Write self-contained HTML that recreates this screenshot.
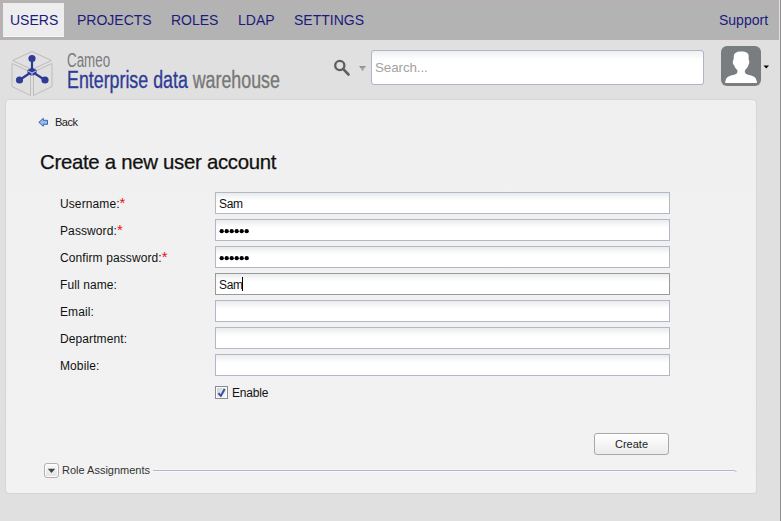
<!DOCTYPE html>
<html><head><meta charset="utf-8">
<style>
*{margin:0;padding:0;box-sizing:border-box}
html,body{width:781px;height:521px;overflow:hidden;background:#e0e0e0;font-family:"Liberation Sans",sans-serif;position:relative}
.abs{position:absolute}
#nav{position:absolute;left:0;top:0;width:779px;height:40px;background:#b3b3b3;border:1px solid #bcb0b0}
#rline{position:absolute;left:780px;top:0;width:1px;height:521px;background:#8f8f8f}
.tab{position:absolute;top:12px;font-size:14px;line-height:16px;color:#1b1b7c;white-space:nowrap}
#utab{position:absolute;left:3px;top:3px;width:61px;height:34px;background:#ededed;border-bottom:1px solid #f6f6f6}
.lbl{position:absolute;left:60px;font-size:12px;line-height:14px;color:#111;white-space:nowrap;letter-spacing:0.1px}
.lbl b{color:#ee1111;font-weight:normal;font-size:15px;margin-left:0;position:relative;top:0px;line-height:0}
.inp{position:absolute;left:215px;width:455px;height:22px;border:1px solid #b5b7c9;background:linear-gradient(#e9ecec 0,#f8f9f9 5px,#fff 8px)}
.inp span{position:absolute;left:3px;top:4px;font-size:12px;line-height:14px;color:#111;letter-spacing:-0.3px}
#panel{position:absolute;left:5px;top:99px;width:752px;height:395px;background:linear-gradient(#f0f0f0,#f2f2f2);border:1px solid #d6d6d6;border-radius:4px}
</style></head>
<body>
<div id="nav"></div>
<div id="utab"></div>
<div class="tab" style="left:10px">USERS</div>
<div class="tab" style="left:77px">PROJECTS</div>
<div class="tab" style="left:171px">ROLES</div>
<div class="tab" style="left:238px">LDAP</div>
<div class="tab" style="left:294px">SETTINGS</div>
<div class="tab" style="left:719px">Support</div>

<!-- logo -->
<svg class="abs" style="left:0;top:40px" width="64" height="60" viewBox="0 40 64 60">
  <g fill="none" stroke="#bcbcbc" stroke-width="1" stroke-linejoin="round">
    <path d="M32 51.5 L51.5 60.5 L32 69.5 L12.5 60.5 Z"/>
    <path d="M12 63.5 L30.5 72 L30.5 95.5 L12 86.5 Z"/>
    <path d="M52 63.5 L33.5 72 L33.5 95.5 L52 86.5 Z"/>
  </g>
  <g fill="#2e3c96" stroke="#2e3c96">
    <line x1="32" y1="59" x2="32" y2="69" stroke-width="2.2"/>
    <line x1="30" y1="73" x2="19.5" y2="80" stroke-width="2.2"/>
    <line x1="34" y1="73" x2="45" y2="80" stroke-width="2.2"/>
    <circle cx="32" cy="58.5" r="3.6" stroke="none"/>
    <circle cx="19.5" cy="80" r="3.6" stroke="none"/>
    <circle cx="45" cy="80" r="3.6" stroke="none"/>
    <path d="M27.5 70 L32 67.5 L36.5 70 L36.5 73.5 L32 76 L27.5 73.5 Z" stroke="none"/>
  </g>
  <path d="M28 71 L32 73 L36 71 M32 73 L32 76.5" fill="none" stroke="#dcdce8" stroke-width="0.9"/>
</svg>
<div class="abs" style="left:67px;top:49px;font-size:19.5px;line-height:22px;color:#7a7a7a;transform:scaleX(0.685);transform-origin:0 0">Cameo</div>
<div class="abs" style="left:67px;top:67px;font-size:23.5px;line-height:26px;color:#2e3c96;transform:scaleX(0.758);transform-origin:0 0;white-space:nowrap;-webkit-text-stroke:0.35px currentColor">Enterprise data <span style="color:#777">warehouse</span></div>

<!-- search -->
<svg class="abs" style="left:330px;top:55px" width="40" height="25" viewBox="330 55 40 25">
  <circle cx="339.8" cy="65.5" r="4.6" fill="none" stroke="#5e5e5e" stroke-width="2.3"/>
  <line x1="343.3" y1="69.2" x2="348.5" y2="74.5" stroke="#5e5e5e" stroke-width="2.6" stroke-linecap="round"/>
  <defs><linearGradient id="tg" x1="0" y1="0" x2="0" y2="1"><stop offset="0" stop-color="#8a8a8a"/><stop offset="0.5" stop-color="#a8a8a8"/><stop offset="1" stop-color="#888"/></linearGradient></defs><path d="M359 66 L366 66 L362.5 71 Z" fill="url(#tg)"/>
</svg>
<div class="abs" style="left:371px;top:50px;width:333px;height:35px;border:1px solid #b1b3cb;border-radius:3px;background:linear-gradient(#eef0f0 0,#fdfdfd 8px,#fff 12px)">
  <span class="abs" style="left:3px;top:9px;font-size:13.4px;line-height:16px;color:#a3a3a3;letter-spacing:-0.1px">Search...</span>
</div>
<!-- avatar -->
<div class="abs" style="left:721px;top:46px;width:40px;height:40px;border-radius:6px;background:#7a7d80;overflow:hidden">
  <svg width="40" height="40" viewBox="0 0 40 40"><path d="M4.2 37 C4.5 32.5 6.5 30.5 10 29.6 C13 28.8 15.5 28.3 16.3 26.5 C16.8 25.2 16.5 24 15.6 23.2 C14.2 21.8 13.4 20.5 13 19 C11.8 18.6 11.6 17 11.9 15.5 C12 14.5 12.3 13.3 12.8 12.5 C12.6 10.5 12.8 8.5 14 7.2 C15.5 5.8 18 5.4 20.5 5.4 C22.5 5.4 24.5 5.6 25.5 6.6 C27 7.2 27.8 8.8 27.7 11 C27.6 12.2 27.5 13 27.8 14 C28.6 14.8 28.5 17.2 27.6 18.6 C27.2 20.4 26.4 21.8 25 23.1 C24 24 23.6 25.3 24 26.5 C24.8 28.3 27.2 28.8 30.2 29.6 C33.7 30.5 35.6 32.5 36 37 Z" fill="#fff"/></svg>
</div>
<svg class="abs" style="left:762px;top:64px" width="8" height="6"><path d="M1.5 1.5 L7 1.5 L4.25 4.5 Z" fill="#000"/></svg>
<div id="rline"></div>

<!-- panel -->
<div id="panel"></div>

<svg class="abs" style="left:37px;top:116px" width="13" height="12" viewBox="37 116 13 12">
  <path d="M38.8 122.3 L43.3 118.3 L43.3 120.3 L47.5 120.3 L47.5 124.3 L43.3 124.3 L43.3 126.3 Z" fill="#9ab8e6" stroke="#3565b8" stroke-width="1"/>
</svg>
<div class="abs" style="left:55px;top:116px;font-size:11px;line-height:13px;color:#222;letter-spacing:-0.5px">Back</div>
<div class="abs" style="left:40px;top:150px;font-size:20.4px;line-height:24px;color:#111;letter-spacing:-0.3px;-webkit-text-stroke:0.25px #111;white-space:nowrap">Create a new user account</div>

<div class="lbl" style="top:197px">Username:<b>*</b></div>
<div class="lbl" style="top:224px">Password:<b>*</b></div>
<div class="lbl" style="top:251px">Confirm password:<b>*</b></div>
<div class="lbl" style="top:278px">Full name:</div>
<div class="lbl" style="top:305px">Email:</div>
<div class="lbl" style="top:332px">Department:</div>
<div class="lbl" style="top:359px">Mobile:</div>

<div class="inp" style="top:192px"><span>Sam</span></div>
<div class="inp" style="top:219px"><svg class="abs" style="left:0;top:0" width="60" height="20"><circle cx="5.7" cy="11.2" r="2.15" fill="#000"/><circle cx="10.7" cy="11.2" r="2.15" fill="#000"/><circle cx="15.7" cy="11.2" r="2.15" fill="#000"/><circle cx="20.7" cy="11.2" r="2.15" fill="#000"/><circle cx="25.7" cy="11.2" r="2.15" fill="#000"/><circle cx="30.7" cy="11.2" r="2.15" fill="#000"/></svg></div>
<div class="inp" style="top:246px"><svg class="abs" style="left:0;top:0" width="60" height="20"><circle cx="5.7" cy="11.2" r="2.15" fill="#000"/><circle cx="10.7" cy="11.2" r="2.15" fill="#000"/><circle cx="15.7" cy="11.2" r="2.15" fill="#000"/><circle cx="20.7" cy="11.2" r="2.15" fill="#000"/><circle cx="25.7" cy="11.2" r="2.15" fill="#000"/><circle cx="30.7" cy="11.2" r="2.15" fill="#000"/></svg></div>
<div class="inp" style="top:273px;border-color:#9a9a9a"><span>Sam</span><i class="abs" style="left:26px;top:3px;width:1px;height:14px;background:#000"></i></div>
<div class="inp" style="top:300px"></div>
<div class="inp" style="top:327px"></div>
<div class="inp" style="top:354px"></div>

<div class="abs" style="left:215px;top:386px;width:13px;height:13px;border:1px solid #8a8a8a;background:linear-gradient(135deg,#c9cdd8,#eef0f3 70%,#fff);box-shadow:inset 0 0 0 1px #fdfdfd">
  <svg class="abs" style="left:0;top:0" width="11" height="11"><path d="M2.4 6.2 L4.8 8.9 L8.7 1.9" fill="none" stroke="#3a4d9e" stroke-width="2"/></svg>
</div>
<div class="abs" style="left:232px;top:386px;font-size:12px;line-height:14px;color:#111;letter-spacing:-0.2px">Enable</div>

<div class="abs" style="left:594px;top:433px;width:75px;height:22px;border:1px solid #a9a9a9;border-radius:3px;background:linear-gradient(#fff,#ebebeb)">
  <span class="abs" style="left:20px;top:3px;font-size:11px;line-height:14px;color:#222">Create</span>
</div>

<div class="abs" style="left:44px;top:463px;width:15px;height:15px;border:1px solid #b0b0b0;border-radius:3px;background:linear-gradient(#fafafa,#e2e2e2);box-shadow:inset 0 0 0 1px #fff">
  <svg class="abs" style="left:0;top:0" width="13" height="13"><path d="M2.8 4.8 L10.2 4.8 L6.5 9 Z" fill="#444"/></svg>
</div>
<div class="abs" style="left:62px;top:464px;font-size:11px;line-height:13px;color:#333">Role Assignments</div>
<div class="abs" style="left:153px;top:470px;width:581px;height:1px;background:#b3b7c9"></div>
<div class="abs" style="left:153px;top:471px;width:581px;height:1px;background:#f8f8f8"></div>
<div class="abs" style="left:153px;top:469px;width:581px;height:1px;background:#f5f5f5"></div>
<svg class="abs" style="left:730px;top:466px" width="10" height="10" viewBox="730 466 10 10"><path d="M733 470.5 L734.5 470.5 Q735.8 470.7 736.3 472" fill="none" stroke="#b3b7c9" stroke-width="1"/></svg>
</body></html>
